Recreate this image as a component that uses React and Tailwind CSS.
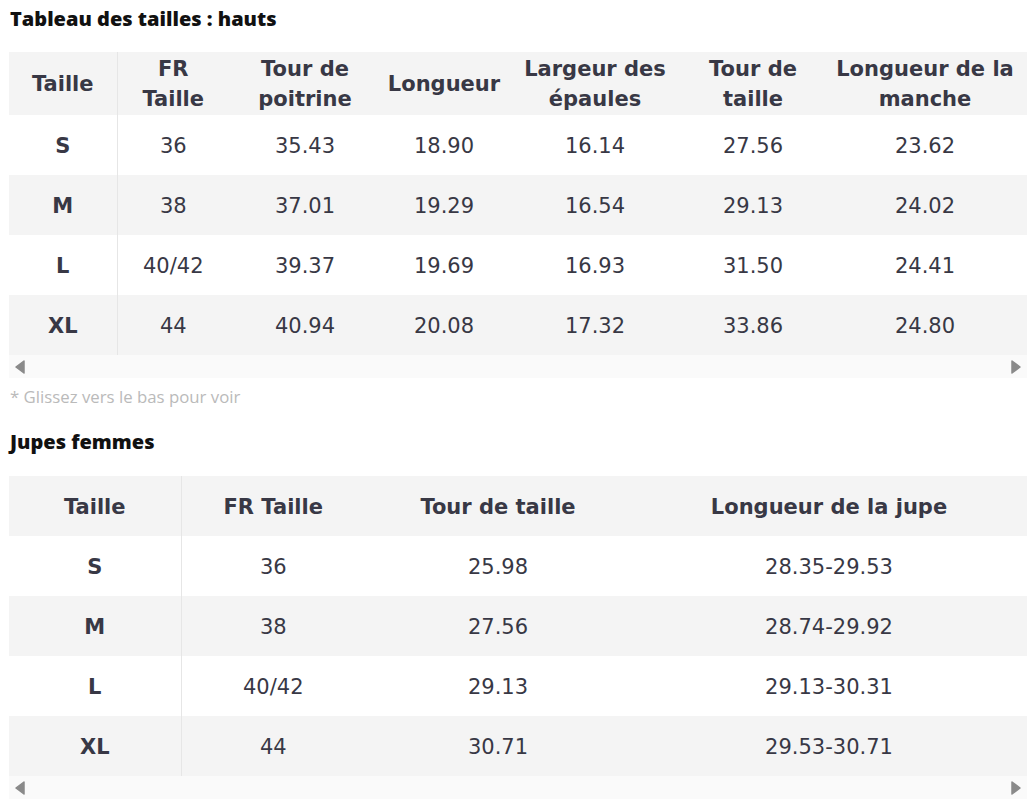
import React from "react";

const tops = {
  widths: [108, 112, 152, 126, 176, 140, 204],
  head: [["Taille"], ["FR", "Taille"], ["Tour de", "poitrine"], ["Longueur"], ["Largeur des", "épaules"], ["Tour de", "taille"], ["Longueur de la", "manche"]],
  rows: [
    ["S", "36", "35.43", "18.90", "16.14", "27.56", "23.62"],
    ["M", "38", "37.01", "19.29", "16.54", "29.13", "24.02"],
    ["L", "40/42", "39.37", "19.69", "16.93", "31.50", "24.41"],
    ["XL", "44", "40.94", "20.08", "17.32", "33.86", "24.80"],
  ],
  headH: "h-[63px]",
};

const skirts = {
  widths: [172, 184, 266, 396],
  head: [["Taille"], ["FR Taille"], ["Tour de taille"], ["Longueur de la jupe"]],
  rows: [
    ["S", "36", "25.98", "28.35-29.53"],
    ["M", "38", "27.56", "28.74-29.92"],
    ["L", "40/42", "29.13", "29.13-30.31"],
    ["XL", "44", "30.71", "29.53-30.71"],
  ],
  headH: "h-[60px]",
};

function SizeTable({ data }) {
  return (
    <div className="w-[1018px]">
      <table className="table-fixed border-collapse w-[1018px] text-[#383845] text-[21px] leading-[30px]" style={{ fontFamily: '"DejaVu Sans", Verdana, sans-serif' }}>
        <colgroup>
          {data.widths.map((w, i) => (
            <col key={i} style={{ width: w }} />
          ))}
        </colgroup>
        <thead>
          <tr className={`bg-[#f4f4f4] ${data.headH}`}>
            {data.head.map((lines, i) => (
              <th key={i} className={`p-0 pt-px font-bold text-center align-middle ${i === 0 ? "border-r border-[#e6e6e6]" : ""}`}>
                {lines.map((l, j) => (
                  <div key={j} className="whitespace-nowrap">{l}</div>
                ))}
              </th>
            ))}
          </tr>
        </thead>
        <tbody>
          {data.rows.map((r, ri) => (
            <tr key={ri} className={`h-[60px] ${ri % 2 === 1 ? "bg-[#f4f4f4]" : "bg-white"}`}>
              {r.map((c, ci) => (
                <td key={ci} className={`p-0 pt-[2px] text-center align-middle ${ci === 0 ? "font-bold border-r border-[#e6e6e6]" : ""}`}>
                  {c}
                </td>
              ))}
            </tr>
          ))}
        </tbody>
      </table>
      <div className="h-[23px] bg-[#fafafa] flex items-center justify-between px-[5px]">
        <svg width="12" height="14" viewBox="0 0 12 14">
          <path d="M10 1 L2 7 L10 13 Z" fill="#8a8a8a" stroke="#8a8a8a" strokeWidth="1.5" strokeLinejoin="round" />
        </svg>
        <svg width="12" height="14" viewBox="0 0 12 14">
          <path d="M2 1 L10 7 L2 13 Z" fill="#8a8a8a" stroke="#8a8a8a" strokeWidth="1.5" strokeLinejoin="round" />
        </svg>
      </div>
    </div>
  );
}

export default function App() {
  return (
    <div className="bg-white w-[1036px] h-[800px] overflow-hidden pl-[9px]" style={{ fontFamily: '"Open Sans", Lato, sans-serif' }}>
      <h2 className="text-[20px] font-extrabold text-[#111] leading-[24px] pt-[7px] pb-[21px] pl-px">
        Tableau des tailles : hauts
      </h2>
      <SizeTable data={tops} />
      <p className="text-[16.8px] text-[#bababa] leading-[20px] mt-[9px] pl-px">* Glissez vers le bas pour voir</p>
      <h2 className="text-[20px] font-extrabold text-[#111] leading-[24px] mt-[23px] mb-[22px] pl-px">Jupes femmes</h2>
      <SizeTable data={skirts} />
    </div>
  );
}
